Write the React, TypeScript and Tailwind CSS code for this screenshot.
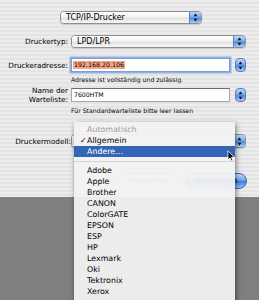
import React from "react";

const stripes =
  "bg-[repeating-linear-gradient(180deg,#ececec_0px,#ececec_2px,#e4e4e4_2px,#e4e4e4_4px)]";

function Arrows() {
  return (
    <svg width="5" height="9" viewBox="0 0 5 9">
      <path d="M2.5 0.5 L4.5 3.2 L0.5 3.2 Z" fill="#111" />
      <path d="M2.5 8.5 L4.5 5.8 L0.5 5.8 Z" fill="#111" />
    </svg>
  );
}

function Popup({ text }: { text?: string }) {
  return (
    <div className="flex h-full w-full rounded-[4px] border border-[#8e8e8e] overflow-hidden shadow-[0_1px_1px_rgba(0,0,0,0.15)]">
      <div className="flex-1 flex items-center pl-[5px] bg-[linear-gradient(180deg,#ffffff_0%,#f4f4f4_45%,#e2e2e2_55%,#f6f6f6_100%)] text-[8px] leading-none text-black">
        {text}
      </div>
      <div className="w-[12px] flex items-center justify-center border-l border-[#5b7fb8] bg-[linear-gradient(180deg,#b9d6fb_0%,#7eaef0_45%,#4f8be3_55%,#a6cdf8_100%)]">
        <Arrows />
      </div>
    </div>
  );
}

function RoundBtn() {
  return (
    <div className="w-[11px] h-[14px] rounded-[4px] border border-[#5b7fb8] flex items-center justify-center bg-[linear-gradient(180deg,#b9d6fb_0%,#7eaef0_45%,#4f8be3_55%,#a6cdf8_100%)]">
      <Arrows />
    </div>
  );
}

function Label({ children }: { children: React.ReactNode }) {
  return (
    <div className="w-[68px] shrink-0 text-right text-[7.3px] leading-[9px] text-black">
      {children}
    </div>
  );
}

const brands = [
  "Adobe",
  "Apple",
  "Brother",
  "CANON",
  "ColorGATE",
  "EPSON",
  "ESP",
  "HP",
  "Lexmark",
  "Oki",
  "Tektronix",
  "Xerox",
];

export default function App() {
  return (
    <div
      className="relative w-[259px] h-[300px] overflow-hidden bg-[#7f7f7f]"
      style={{ fontFamily: '"DejaVu Sans", "Noto Sans", sans-serif' }}
    >
      <div className={`h-[197px] flex flex-col ${stripes}`}>
        {/* TCP/IP */}
        <div className="mt-[11px] ml-[60px] w-[142px] h-[13px]">
          <Popup text="TCP/IP-Drucker" />
        </div>

        {/* Druckertyp */}
        <div className="mt-[11px] flex items-center h-[13px]">
          <Label>Druckertyp:</Label>
          <div className="ml-[3px] w-[175px] h-[13px]">
            <Popup text="LPD/LPR" />
          </div>
        </div>

        {/* Druckeradresse */}
        <div className="mt-[10px] flex items-center h-[14px]">
          <Label>Druckeradresse:</Label>
          <div className="ml-[3px] w-[159px] h-[14px] bg-white border border-[#7d9fd6] ring-[1.5px] ring-[#8db2ea] flex items-center pl-[1px]">
            <span className="bg-[#f6a584] text-[6.3px] leading-[8px] px-[1px] text-black">
              192.168.20.106
            </span>
          </div>
          <div className="ml-[5px]">
            <RoundBtn />
          </div>
        </div>

        <div className="mt-[4px] h-[8px] ml-[71px] text-[6.2px] leading-[8px] text-black">
          Adresse ist vollständig und zulässig.
        </div>

        {/* Warteliste */}
        <div className="mt-[4px] flex items-center h-[14px]">
          <Label>
            Name der
            <br />
            Warteliste:
          </Label>
          <div className="ml-[3px] w-[159px] h-[14px] bg-white border border-t-[#6e6e6e] border-[#a6a6a6] flex items-center pl-[2px]">
            <span className="text-[6.2px] leading-[8px] text-black">7600HTM</span>
          </div>
          <div className="ml-[5px]">
            <RoundBtn />
          </div>
        </div>

        <div className="mt-[5px] h-[8px] ml-[71px] text-[6.2px] leading-[8px] text-black">
          Für Standardwarteliste bitte leer lassen
        </div>

        {/* Druckermodell */}
        <div className="mt-[19px] flex items-center h-[14px]">
          <div className="w-[72px] shrink-0 text-right pr-[1px] text-[7.3px] leading-[9px] text-black">
            Druckermodell:
          </div>
          <div className="ml-[-1px] w-[175px] h-[14px]">
            <Popup text="" />
          </div>
        </div>

        {/* Buttons */}
        <div className="mt-[25px] flex h-[16px]">
          <div className="ml-[117px] w-[61px] h-[16px] rounded-full border border-[#8a8a8a] bg-[linear-gradient(180deg,#ffffff_0%,#eeeeee_50%,#f8f8f8_100%)] flex items-center justify-center text-[7.5px] text-black">
            Abbrechen
          </div>
          <div className="ml-[7px] w-[62px] h-[16px] rounded-full border border-[#3d64a8] bg-[linear-gradient(180deg,#c3dcfb_0%,#6ea3ee_45%,#3f7ee0_55%,#9cc6f7_100%)] flex items-center justify-center text-[7.5px] text-black">
            Hinzufügen
          </div>
        </div>
      </div>

      {/* Menu */}
      <div className="absolute left-[74px] top-[122px] w-[161px] h-[182px] bg-[rgba(242,242,242,0.95)] shadow-[1px_2px_5px_rgba(0,0,0,0.5)] pt-[2px] text-[7.9px] text-black">
        <div className="h-[11px] leading-[11px] pl-[13px] text-[#9d9d9d]">Automatisch</div>
        <div className="h-[11px] leading-[11px] pl-[6px] flex">
          <span className="w-[7px]">✓</span>
          <span>Allgemein</span>
        </div>
        <div className="h-[11px] leading-[11px] pl-[13px] bg-[#3566b6] text-white">Andere…</div>
        <div className="h-[8px] flex items-center">
          <div className="w-full h-[1px] bg-[#d4d4d4]" />
        </div>
        {brands.map((b) => (
          <div key={b} className="h-[11px] leading-[11px] pl-[13px]">
            {b}
          </div>
        ))}
      </div>

      {/* Cursor */}
      <svg
        className="absolute left-[227px] top-[150px]"
        width="8"
        height="12"
        viewBox="0 0 8 12"
      >
        <path
          d="M1 0.8 L1 9.8 L3 7.8 L4.4 11 L5.8 10.4 L4.5 7.3 L7.2 7.3 Z"
          fill="#000"
          stroke="#fff"
          strokeWidth="0.8"
        />
      </svg>
    </div>
  );
}
